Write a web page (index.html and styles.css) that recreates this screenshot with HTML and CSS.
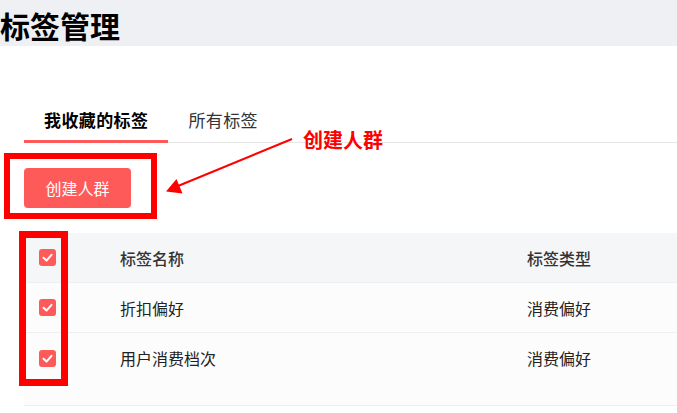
FILE: index.html
```html
<!DOCTYPE html>
<html lang="zh-CN">
<head>
<meta charset="utf-8">
<title>标签管理</title>
<link rel="stylesheet" href="styles.css">
</head>
<body>
<div class="page">
  <header class="page-header">
    <h1 class="page-title">标签管理</h1>
  </header>
  <main class="content">
    <nav class="tabs">
      <div class="tab tab-active">我收藏的标签</div>
      <div class="tab">所有标签</div>
    </nav>
    <div class="toolbar">
      <button class="btn-primary">创建人群</button>
    </div>
    <div class="table">
      <div class="row row-head">
        <div class="cell cell-check"><span class="checkbox"><svg viewBox="0 0 17 17" width="17" height="17"><polyline points="4.5,8.8 7.5,11.6 12.5,5.8" fill="none" stroke="#fff" stroke-width="2" stroke-linecap="round" stroke-linejoin="round"/></svg></span></div>
        <div class="cell cell-name">标签名称</div>
        <div class="cell cell-type">标签类型</div>
      </div>
      <div class="row row-body">
        <div class="cell cell-check"><span class="checkbox"><svg viewBox="0 0 17 17" width="17" height="17"><polyline points="4.5,8.8 7.5,11.6 12.5,5.8" fill="none" stroke="#fff" stroke-width="2" stroke-linecap="round" stroke-linejoin="round"/></svg></span></div>
        <div class="cell cell-name">折扣偏好</div>
        <div class="cell cell-type">消费偏好</div>
      </div>
      <div class="row row-body row-last">
        <div class="cell cell-check"><span class="checkbox"><svg viewBox="0 0 17 17" width="17" height="17"><polyline points="4.5,8.8 7.5,11.6 12.5,5.8" fill="none" stroke="#fff" stroke-width="2" stroke-linecap="round" stroke-linejoin="round"/></svg></span></div>
        <div class="cell cell-name">用户消费档次</div>
        <div class="cell cell-type">消费偏好</div>
      </div>
      <div class="table-filler"></div>
    </div>
  </main>

  <div class="mark mark-button"></div>
  <div class="mark mark-checks"></div>
  <div class="note-label">创建人群</div>
  <svg class="note-arrow" width="677" height="413" viewBox="0 0 677 413">
    <line x1="292" y1="139" x2="178" y2="186" stroke="#ff0000" stroke-width="2"/>
    <polygon points="166,191.5 176.5,179 182.5,193.5" fill="#ff0000"/>
  </svg>
</div>
</body>
</html>
```
FILE: styles.css
```css
* { box-sizing: border-box; }
html, body { margin: 0; padding: 0; background: #fff; }
body {
  font-family: "Noto Sans CJK SC", "Noto Sans", sans-serif;
  color: #333;
}
.page {
  position: relative;
  width: 677px;
  height: 413px;
  overflow: hidden;
}
.page-header {
  height: 46px;
  background: #eff0f3;
  display: flex;
  align-items: flex-end;
}
.page-title {
  margin: 0;
  font-size: 30px;
  font-weight: 700;
  line-height: 40px;
  color: #000;
  padding-bottom: 1px;
}
.content {
  padding: 58px 0 0 24px;
}
.tabs {
  display: flex;
  border-bottom: 1px solid #e6e6e6;
}
.tab {
  padding: 0 20px 4px;
  font-size: 17px;
  letter-spacing: 0.4px;
  line-height: 32px;
  color: #333;
  border-bottom: 3px solid transparent;
  margin-bottom: -1px;
}
.tab-active {
  font-weight: 700;
  color: #000;
  border-bottom-color: #ff5a5a;
}
.toolbar {
  padding-top: 25px;
}
.btn-primary {
  width: 107px;
  height: 40px;
  border: none;
  border-radius: 4px;
  background: #ff5a5a;
  color: #fff;
  font-family: inherit;
  font-size: 16px;
  padding: 0;
}
.table {
  margin-top: 25px;
  border-bottom: 1px solid #eeeeee;
}
.row {
  display: flex;
  align-items: center;
  height: 50px;
  border-bottom: 1px solid #efefef;
}
.row-head {
  background: #f5f6f8;
  font-weight: 500;
  color: #333;
}
.row-body {
  background: #fcfcfc;
  color: #222;
}
.row-last { border-bottom: none; }
.table-filler {
  height: 22px;
  background: #fcfcfc;
}
.cell { font-size: 16px; line-height: 22px; }
.cell-check {
  width: 96px;
  padding-left: 15px;
  display: flex;
  align-items: center;
}
.cell-name { width: 407px; }
.cell-type { flex: 1; }
.checkbox {
  width: 17px;
  height: 17px;
  border-radius: 3px;
  background: #ff5a5a;
  display: block;
}
.checkbox svg { display: block; }

.mark {
  position: absolute;
  border: 6px solid #ff0000;
}
.mark-button {
  left: 4px; top: 153px; width: 153px; height: 66px;
}
.mark-checks {
  left: 19px; top: 231px; width: 49px; height: 155px;
  border-width: 7px;
}
.note-label {
  position: absolute;
  left: 303px;
  top: 126px;
  font-size: 20px;
  line-height: 28px;
  font-weight: 700;
  color: #ff0000;
}
.note-arrow {
  position: absolute;
  left: 0;
  top: 0;
  pointer-events: none;
}
```
